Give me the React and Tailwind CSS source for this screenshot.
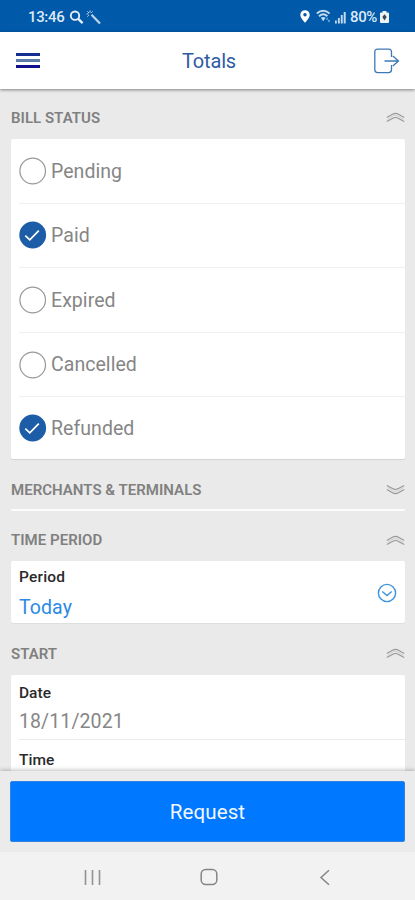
import { useState } from 'react';

const STATUSES = ['Pending', 'Paid', 'Expired', 'Cancelled', 'Refunded'];

function Chevrons({ open }) {
  return (
    <svg width="19" height="11" viewBox="0 0 19 11" fill="none" stroke="#999" strokeWidth="1.1" className={open ? '' : 'mb-0.5 rotate-180'}>
      <path d="M0.8 5.4 L6.5 2.2 Q9.5 0.5 12.5 2.2 L18.2 5.4" />
      <path d="M0.8 9.6 L6.5 6.4 Q9.5 4.7 12.5 6.4 L18.2 9.6" />
      <path d="M1.5 7.6 L6.5 4.3 Q9.5 2.5 12.5 4.3 L17.5 7.6" stroke="#cdcdcd" strokeWidth="1" />
    </svg>
  );
}

function SectionHeader({ title, open, onClick, className }) {
  return (
    <button type="button" onClick={onClick} className={`flex w-full items-center justify-between ${className}`}>
      <span className="text-[15px] leading-5 font-semibold tracking-[0.03px] text-[#808080]">{title}</span>
      <Chevrons open={open} />
    </button>
  );
}

function StatusBar() {
  return (
    <div className="flex h-8 shrink-0 items-center justify-between bg-[#0059a9] pt-0.5 pr-[26px] pl-7 text-white">
      <div className="flex items-center">
        <span className="w-[37px] text-[15px] font-medium tracking-[-0.35px] text-[#dceaf7]">13:46</span>
        <svg width="15" height="15" viewBox="0 0 15 15" fill="none" stroke="#e5f0fa" className="ml-1">
          <circle cx="6" cy="5.7" r="4.2" strokeWidth="1.9" />
          <path d="M9 8.7 L13.6 13.2" strokeWidth="2.4" />
        </svg>
        <svg width="16" height="15" viewBox="0 0 16 15" fill="none" stroke="#bcd5ec" className="ml-0.5">
          <path d="M5.5 4.8 L14 13.5" strokeWidth="2.2" />
          <path d="M4 0.5 V2.6 M0.5 4 H2.6 M1.4 1.4 L3 3 M6.6 1.4 L5.2 2.8 M1.4 6.6 L2.8 5.2" strokeWidth="1" />
        </svg>
      </div>
      <div className="flex items-center">
        <svg width="10" height="13" viewBox="0 0 10 13" className="-mt-0.5">
          <path d="M5 0.3 C2.3 0.3 0.3 2.3 0.3 4.9 C0.3 8 5 12.6 5 12.6 C5 12.6 9.7 8 9.7 4.9 C9.7 2.3 7.7 0.3 5 0.3 Z" fill="#fff" />
          <circle cx="5" cy="4.8" r="1.7" fill="#0059a9" />
        </svg>
        <svg width="16" height="14" viewBox="0 0 16 14" fill="none" stroke="#c3daee" className="-mt-0.5 ml-1.5">
          <path d="M0.8 4.4 Q7.2 -1 13.6 4.4" strokeWidth="2" />
          <path d="M3 7.2 Q7.2 3.4 11.4 7.2" strokeWidth="2" />
          <path d="M4.8 8.8 Q7.2 7 9.6 8.8 L7.2 12.2 Z" fill="#c3daee" stroke="none" />
          <path d="M9.8 10.6 L11.2 8.4 L12.6 10.6 Z M13 13.4 L14.4 11.2 H11.6 Z" fill="#6cc0ea" stroke="none" />
        </svg>
        <svg width="12" height="13" viewBox="0 0 12 13" fill="#c3daee" className="ml-[3px]">
          <rect x="0" y="9.5" width="1.8" height="3" />
          <rect x="2.9" y="7" width="1.9" height="5.5" />
          <rect x="5.8" y="4" width="1.9" height="8.5" />
          <rect x="8.7" y="1" width="2" height="11.5" />
        </svg>
        <span className="ml-[3px] w-[29px] text-[15px] font-medium tracking-[-0.4px] text-[#dceaf7]">80%</span>
        <svg width="9" height="12" viewBox="0 0 9 12" className="ml-px">
          <path d="M2.6 0 H6.4 V1.4 H8 Q9 1.4 9 2.4 V11 Q9 12 8 12 H1 Q0 12 0 11 V2.4 Q0 1.4 1 1.4 H2.6 Z" fill="#eef3f8" />
          <path d="M4.5 3.2 L6.7 6 L4.5 9.5 L2.3 6 Z" fill="#3e4653" />
        </svg>
      </div>
    </div>
  );
}

function Header() {
  return (
    <header className="relative z-10 flex h-[57px] shrink-0 items-center justify-between bg-white pr-[15px] pl-4 shadow-[0_1px_3px_rgba(0,0,0,0.45)]">
      <button type="button" className="flex w-[29px] flex-col gap-[3px]">
        <span className="h-[3px] w-6 bg-[#142f91]" />
        <span className="h-[3px] w-6 bg-[#5c7ca8]" />
        <span className="h-[3px] w-6 bg-[#10108a]" />
      </button>
      <h1 className="text-[20px] tracking-[-0.15px] text-[#2f5ba3]">Totals</h1>
      <svg width="27" height="26" viewBox="0 0 27 26" fill="none" stroke="#3d79b5" strokeWidth="1.3">
        <path d="M18.5 9 V4 Q18.5 1.2 15.7 1.2 H4.6 Q1.8 1.2 1.8 4 V21.8 Q1.8 24.6 4.6 24.6 H15.7 Q18.5 24.6 18.5 21.8 V17" />
        <path d="M11.5 13 H25.5 M19.8 8 L25.5 13 L19.8 18" />
      </svg>
    </header>
  );
}

function StatusRow({ label, checked, onToggle }) {
  return (
    <button
      type="button"
      onClick={onToggle}
      className="ml-2 flex h-[64.6px] shrink-0 items-center border-b border-[#efefef] last:h-[62px] last:border-b-0"
    >
      <svg width="28" height="28" viewBox="0 0 28 28" fill="none">
        {checked ? (
          <>
            <circle cx="13.7" cy="14" r="13.4" fill="#1d5ca6" />
            <path d="M6.3 14.6 L10.8 18.8 L19.8 9.6" stroke="#fff" strokeWidth="1.7" />
          </>
        ) : (
          <circle cx="13.7" cy="14" r="12.8" stroke="#999" strokeWidth="1.2" />
        )}
      </svg>
      <span className="ml-1 pt-px text-[19.5px] tracking-[0.05px] text-[#868686]">{label}</span>
    </button>
  );
}

export default function App() {
  const [selected, setSelected] = useState(['Paid', 'Refunded']);
  const [sections, setSections] = useState({ status: true, merchants: false, period: true, start: true });

  const toggleStatus = (name) => {
    setSelected(selected.includes(name) ? selected.filter((s) => s !== name) : [...selected, name]);
  };

  const toggleSection = (key) => setSections({ ...sections, [key]: !sections[key] });

  return (
    <div className="flex h-[900px] w-[415px] flex-col overflow-hidden bg-[#eaeaea] font-['Roboto',sans-serif]">
      <StatusBar />
      <Header />

      <main className="min-h-0 flex-1 overflow-hidden pr-[10px] pl-[11px]">
        <SectionHeader title="BILL STATUS" open={sections.status} onClick={() => toggleSection('status')} className="h-[50px] pt-[7px]" />
        {sections.status && (
          <div className="flex h-80 flex-col rounded-xs bg-white shadow-[0_1px_1px_rgba(0,0,0,0.1)]">
            {STATUSES.map((name) => (
              <StatusRow key={name} label={name} checked={selected.includes(name)} onToggle={() => toggleStatus(name)} />
            ))}
          </div>
        )}

        <SectionHeader title="MERCHANTS & TERMINALS" open={sections.merchants} onClick={() => toggleSection('merchants')} className="h-[52px] border-b-2 border-[#fbfbfb] pt-3" />
        <SectionHeader title="TIME PERIOD" open={sections.period} onClick={() => toggleSection('period')} className="h-[50px] pt-2" />
        {sections.period && (
          <div className="flex h-[62px] items-center justify-between rounded-xs bg-white pr-2 pl-2 shadow-[0_1px_1px_rgba(0,0,0,0.06)]">
            <div>
              <p className="text-[15.5px] leading-[30px] font-medium tracking-[0.2px] text-[#2a2a2a]">Period</p>
              <p className="pt-px text-[19.5px] leading-[30px] tracking-[0.1px] text-[#2c8ae4]">Today</p>
            </div>
            <svg width="20" height="20" viewBox="0 0 20 20" fill="none" stroke="#3c93dc" strokeWidth="1.4" className="mt-0.5">
              <circle cx="10" cy="10" r="8.6" />
              <path d="M5.3 8.5 L10 12.5 L14.7 8.5" />
            </svg>
          </div>
        )}

        <SectionHeader title="START" open={sections.start} onClick={() => toggleSection('start')} className="h-[52px] pt-[9px]" />
        {sections.start && (
          <div className="rounded-xs bg-white pt-[3px] pl-2">
            <div className="h-[62px] border-b border-[#ececec]">
              <p className="text-[15.5px] leading-[30px] font-medium text-[#2a2a2a]">Date</p>
              <p className="text-[19.5px] leading-[27px] tracking-[0.1px] text-[#868686]">18/11/2021</p>
            </div>
            <div className="h-[65px] pt-[5px]">
              <p className="text-[15.5px] leading-[30px] font-medium text-[#2a2a2a]">Time</p>
            </div>
          </div>
        )}
      </main>

      <footer className="relative z-10 h-[81px] shrink-0 bg-[#ebebeb] pt-[10px] pr-[10px] pl-[10px] shadow-[0_-1px_4px_rgba(0,0,0,0.25)]">
        <button type="button" className="h-[61px] w-full rounded-xs border border-[#2f83e6] bg-[#0078ff] pt-0.5 text-[20.5px] tracking-[0.1px] text-[#f0f7ff]">
          Request
        </button>
      </footer>

      <nav className="relative z-10 flex h-12 shrink-0 items-center justify-between bg-[#f2f2f2] pt-0.5 pr-[84px] pl-[84px]">
        <svg width="17" height="17" viewBox="0 0 17 17" stroke="#929292" strokeWidth="1.6">
          <path d="M1.5 1 V16 M8.5 1 V16 M15.5 1 V16" />
        </svg>
        <svg width="18" height="18" viewBox="0 0 18 18" fill="none" stroke="#858585" strokeWidth="1.5" className="-ml-0.5">
          <rect x="1.2" y="1.5" width="15.6" height="15" rx="4.5" />
        </svg>
        <svg width="12" height="17" viewBox="0 0 12 17" fill="none" stroke="#858585" strokeWidth="1.5">
          <path d="M10 1.2 L2 8.5 L10 15.8" />
        </svg>
      </nav>
    </div>
  );
}
